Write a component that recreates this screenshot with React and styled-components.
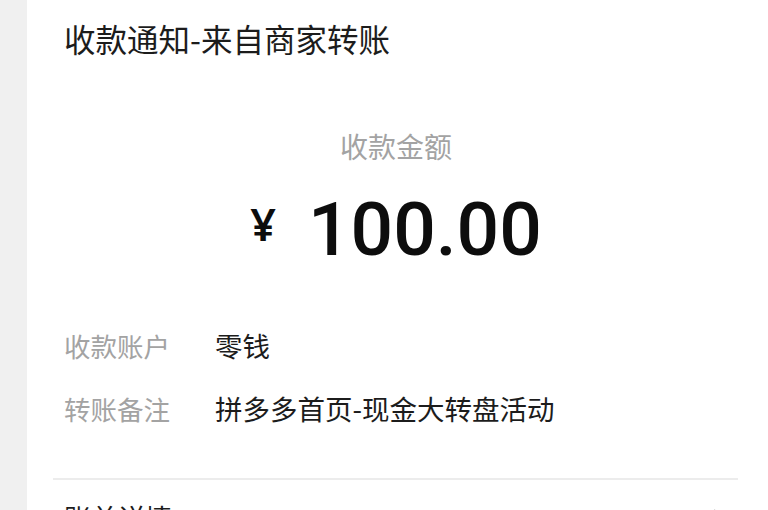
import React from 'react';
import styled, { createGlobalStyle } from 'styled-components';

const GlobalStyle = createGlobalStyle`
  html, body {
    margin: 0;
    padding: 0;
    background: #f1f1f1;
    font-family: "Noto Sans CJK SC", "Noto Sans", sans-serif;
  }
`;

const rows = [
  { label: '收款账户', value: '零钱' },
  { label: '转账备注', value: '拼多多首页-现金大转盘活动' },
];

const App = () => {
  return (
    <>
      <GlobalStyle />
      <Page>
        <Side />
        <Card>
          <Title>收款通知-来自商家转账</Title>
          <AmountBlock>
            <AmountLabel>收款金额</AmountLabel>
            <Amount>
              <Currency>¥</Currency>
              <Number>100.00</Number>
            </Amount>
          </AmountBlock>
          <Details>
            {rows.map((r) => (
              <Row key={r.label}>
                <Label>{r.label}</Label>
                <Value>{r.value}</Value>
              </Row>
            ))}
          </Details>
          <Divider />
          <Footer>
            <FooterText>账单详情</FooterText>
            <Chevron viewBox="0 0 12 20" width="12" height="20">
              <path d="M2 2 L10 10 L2 18" fill="none" stroke="#b5b5b5" strokeWidth="2" />
            </Chevron>
          </Footer>
        </Card>
      </Page>
    </>
  );
};

export default App;

const Page = styled.div`
  display: flex;
  width: 768px;
  height: 510px;
  overflow: hidden;
`;

const Side = styled.div`
  width: 27px;
  flex-shrink: 0;
  background: #f0f0f0;
`;

const Card = styled.div`
  flex: 1;
  background: #fff;
  padding: 16px 30px 0 37px;
  display: flex;
  flex-direction: column;
  & > * {
    flex-shrink: 0;
  }
`;

const Title = styled.div`
  font-size: 31.5px;
  line-height: 44px;
  color: #1c1c1c;
`;

const AmountBlock = styled.div`
  display: flex;
  flex-direction: column;
  align-items: center;
  margin-top: 67px;
  padding-right: 10px;
`;

const AmountLabel = styled.div`
  font-size: 28px;
  line-height: 38px;
  color: #a3a3a3;
`;

const Amount = styled.div`
  display: flex;
  align-items: baseline;
  margin-top: 24px;
  color: #0d0d0d;
`;

const Currency = styled.span`
  font-family: "Noto Sans", sans-serif;
  font-size: 45px;
  font-weight: 600;
  margin-right: 32px;
  position: relative;
  top: -14px;
`;

const Number = styled.span`
  font-family: Roboto, sans-serif;
  font-size: 75px;
  font-weight: 500;
  line-height: 80px;
`;

const Details = styled.div`
  display: flex;
  flex-direction: column;
  gap: 24px;
  margin-top: 57px;
`;

const Row = styled.div`
  display: flex;
  align-items: baseline;
  line-height: 38px;
`;

const Label = styled.div`
  width: 151px;
  font-size: 26.5px;
  color: #a3a3a3;
`;

const Value = styled.div`
  font-size: 27.5px;
  color: #1c1c1c;
`;

const Divider = styled.div`
  height: 2px;
  background: #ececec;
  margin: 50px 0 0 -11px;
`;

const Footer = styled.div`
  display: flex;
  justify-content: space-between;
  align-items: center;
  margin-top: 19px;
  padding-right: 14px;
`;

const FooterText = styled.div`
  font-size: 27px;
  line-height: 38px;
  color: #1c1c1c;
`;

const Chevron = styled.svg`
  display: block;
`;
